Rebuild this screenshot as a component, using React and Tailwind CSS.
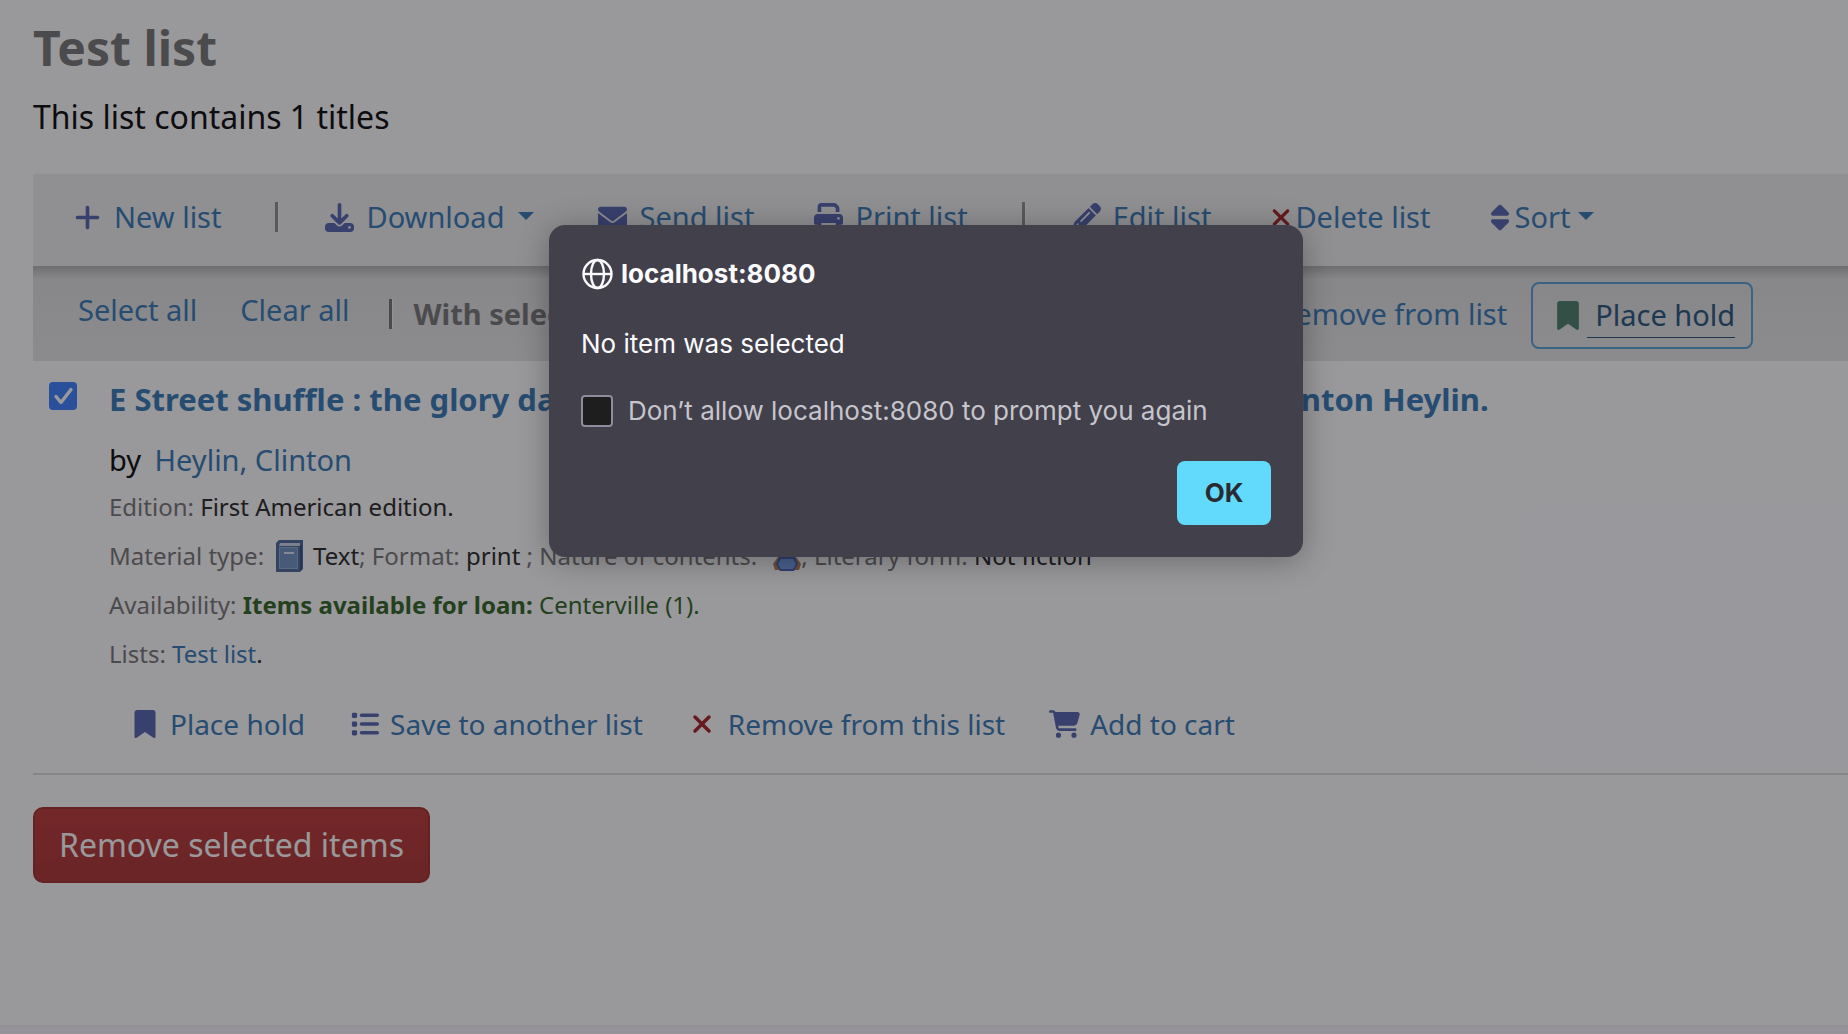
import React, { useState } from "react";
import {
  FaPlus,
  FaDownload,
  FaEnvelope,
  FaPrint,
  FaPencil,
  FaXmark,
  FaSort,
  FaBookmark,
  FaList,
  FaCartShopping,
} from "react-icons/fa6";

const App = () => {
  const [checked, setChecked] = useState(true);

  return (
    <div className="relative min-h-screen overflow-hidden bg-white font-['Noto_Sans',sans-serif] text-[29px] text-black flex flex-col whitespace-nowrap">
      <main className="pl-[33px] pt-[15px]">
        <h1 className="text-[48px] leading-[66px] font-bold text-[#727272]">
          Test list
        </h1>
        <p className="mt-3 text-[32px] leading-[48px]">
          This list contains 1 titles
        </p>

        {/* List toolbar */}
        <nav className="mt-[33px] h-[92px] bg-[#eeeeee] pl-2.5 pb-1.5 flex items-center">
          <ToolLink icon={<FaPlus className="mr-3" />} label="New list" />
          <Separator />
          <ToolLink icon={<FaDownload className="mr-3" />} label="Download">
            <Caret className="ml-3.5 mr-1" />
          </ToolLink>
          <ToolLink icon={<FaEnvelope className="mr-3" />} label="Send list" />
          <ToolLink icon={<FaPrint className="mr-3" />} label="Print list" />
          <Separator />
          <ToolLink icon={<FaPencil className="mr-3" />} label="Edit list" />
          <ToolLink
            icon={<FaXmark className="w-5 mr-1 text-[#a01c1c]" />}
            label="Delete list"
          />
          <ToolLink icon={<FaSort className="w-5 mr-1" />} label="Sort">
            <Caret className="ml-2" />
          </ToolLink>
        </nav>

        {/* Selection toolbar */}
        <div className="h-[95px] bg-[linear-gradient(to_bottom,#b2b2b2_0%,#e0e0e0_14%,#e6e6e6_100%)] pl-[45px] flex items-center">
          <a href="#" className="text-[#3076b2] pb-2">
            Select all
          </a>
          <a href="#" className="text-[#3076b2] pb-2 ml-[43px]">
            Clear all
          </a>
          <span className="ml-10 mr-5 h-[30px] w-[4px] border-l-3 border-[#727272] bg-white/60" />
          <span className="font-bold text-[#727272]">
            With selected titles:
          </span>
          <a
            href="#"
            className="text-[#3076b2] ml-[540px] flex items-center gap-2"
          >
            <FaXmark className="text-[#a01c1c]" />
            Remove from list
          </a>
          <a
            href="#"
            className="ml-6 mt-1 h-[67px] pl-5 pr-4 border-2 border-[#509fd8] rounded-lg flex items-center text-[#205078]"
          >
            <FaBookmark className="w-[22px] ml-1 mr-2 text-[#457a64]" />
            <span className="pl-2 border-b border-[#205078]">Place hold</span>
          </a>
        </div>

        {/* Search result */}
        <div className="flex border-b-2 border-[#dddddd] h-[414px]">
          <span className="relative w-[76px] shrink-0 pl-4 pt-[21px]">
            <input
              type="checkbox"
              aria-label="Select E Street shuffle"
              checked={checked}
              onChange={(e) => setChecked(e.target.checked)}
              className="block appearance-none size-7 rounded-sm border border-gray-500 checked:border-0 checked:bg-[#377cff]"
            />
            {checked && (
              <svg
                viewBox="0 0 28 28"
                className="absolute left-4 top-[21px] size-7 pointer-events-none"
                fill="none"
                stroke="white"
                strokeWidth="3.4"
                strokeLinecap="round"
                strokeLinejoin="round"
              >
                <path d="M7 14.5l5 6L22 7.5" />
              </svg>
            )}
          </span>
          <div>
            <h2 className="mt-[15px] text-[31px] leading-[46px] font-bold">
              <a href="#" className="text-[#3076b2]">
                E Street shuffle : the glory days of Bruce Springsteen &amp; the
                E Street Band /&nbsp; Clinton Heylin.
              </a>
            </h2>
            <p className="mt-4 leading-[44px]">
              by{" "}
              <a href="#" className="ml-1.5 text-[#3076b2]">
                Heylin, Clinton
              </a>
            </p>
            <div className="text-[24px] leading-[49px] text-[#727272]">
              <p>
                Edition: <Value>First American edition.</Value>
              </p>
              <p className="flex items-center h-[49px]">
                Material type: <BookIcon /> <Value>Text</Value>; Format:&nbsp;
                <Value>print</Value>&nbsp;; Nature of contents:
                <ReaderIcon />, Literary form:&nbsp;
                <Value>Not fiction</Value>
              </p>
              <p>
                Availability:{" "}
                <span className="text-[#2a5f1b]">
                  <b>Items available for loan:</b> Centerville (1).
                </span>
              </p>
              <p>
                Lists:{" "}
                <a href="#" className="text-[#3076b2]">
                  Test list
                </a>
                <Value>.</Value>
              </p>
            </div>
            <div className="mt-6 ml-5 flex items-center gap-11 text-[28px] leading-[44px]">
              <Action icon={<FaBookmark />} label="Place hold" />
              <Action icon={<FaList />} label="Save to another list" />
              <Action
                icon={<FaXmark className="text-[#a01c1c]" />}
                label="Remove from this list"
              />
              <Action
                icon={<FaCartShopping className="w-[31px]" />}
                label="Add to cart"
              />
            </div>
          </div>
        </div>

        <button className="mt-8 h-[76px] px-6 rounded-[10px] border-2 border-[#a02826] bg-linear-to-b from-[#ba322f] to-[#aa2e2b] text-[32px] text-white">
          Remove selected items
        </button>
      </main>
      <footer className="mt-auto h-[9px] border-t-2 border-[#f0f0f0] bg-[#f7f4fb]" />

      {/* Browser alert */}
      <div className="absolute inset-0 bg-[#1c1b22]/45 pl-1 pt-[225px] flex justify-center items-start">
        <Alert />
      </div>
    </div>
  );
};

// ---------------------- COMPONENTS --------------------------

const Alert = () => (
  <div
    role="alertdialog"
    aria-labelledby="alert-title"
    className="w-[754px] h-[332px] rounded-2xl bg-[#42404b] px-8 pt-[33px] pb-8 shadow-[0_4px_32px_rgba(0,0,0,0.3)] font-[Inter,sans-serif] text-[26px] leading-8 text-[#fbfbfe] flex flex-col"
  >
    <h3 id="alert-title" className="flex items-center gap-2 font-bold">
      <GlobeIcon />
      localhost:8080
    </h3>
    <p className="mt-[38px]">No item was selected</p>
    <label className="mt-[35px] flex items-center gap-[15px] text-[#c6c5cd]">
      <input
        type="checkbox"
        className="appearance-none size-8 rounded-sm border-2 border-[#8f8d9d] bg-[#1e1e1e]"
      />
      Don’t allow localhost:8080 to prompt you again
    </label>
    <button className="mt-auto self-end w-[94px] h-16 rounded-lg bg-[#62dafb] font-bold text-[#2b2a33]">
      OK
    </button>
  </div>
);

const ToolLink = ({ icon, label, children }) => (
  <a href="#" className="px-[30px] flex items-center text-[#3076b2]">
    <span className="text-[#4f60ae]">{icon}</span>
    {label}
    {children}
  </a>
);

const Action = ({ icon, label }) => (
  <a href="#" className="flex items-center gap-2.5 text-[#3076b2]">
    <span className="w-[31px] flex justify-center text-[#4f60ae]">{icon}</span>
    {label}
  </a>
);

const Separator = () => (
  <span className="ml-6 mr-4 h-[30px] w-[4px] border-l-3 border-[#8a8a8a] bg-white/60" />
);

const Caret = ({ className }) => (
  <svg viewBox="0 0 16 8" className={`w-4 h-2 mb-0.5 ${className}`}>
    <path d="M0 0h16L8 8z" fill="currentColor" />
  </svg>
);

const Value = ({ children }) => <span className="text-[#202020]">{children}</span>;

const GlobeIcon = () => (
  <svg
    viewBox="0 0 32 32"
    className="size-8"
    fill="none"
    stroke="currentColor"
    strokeWidth="2.4"
  >
    <circle cx="16.5" cy="16" r="14" />
    <ellipse cx="16.5" cy="16" rx="6.5" ry="14" />
    <path d="M2.5 16h28" />
  </svg>
);

const BookIcon = () => (
  <svg viewBox="0 0 27 32" className="w-[27px] h-8 ml-3 mr-2.5">
    <path d="M3 0h24v29l-3 3H0V3z" fill="#4a659a" />
    <path d="M4 3h20v3H3z" fill="#c9d3e3" />
    <path d="M3 7h19v22H3z" fill="#87a9cc" />
    <path d="M4 8h17v20H4z" fill="#6a8fbd" />
    <path d="M8 12h10v2H8z" fill="#dbe4f0" />
    <path d="M24 5h2v24l-2 2z" fill="#2f4779" />
  </svg>
);

const ReaderIcon = () => (
  <svg viewBox="0 0 28 32" className="w-7 h-8 ml-4">
    <circle cx="14" cy="8" r="7" fill="#c98c55" />
    <path d="M5 17h18l5 7-2 6H2l-2-6z" fill="#b47a48" />
    <path d="M7 15h14l4 9-4 7H7l-4-7z" fill="#3c5db8" />
    <path d="M8 19h12l3 5-3 5H8l-3-5z" fill="#6d9be6" />
  </svg>
);

export default App;
